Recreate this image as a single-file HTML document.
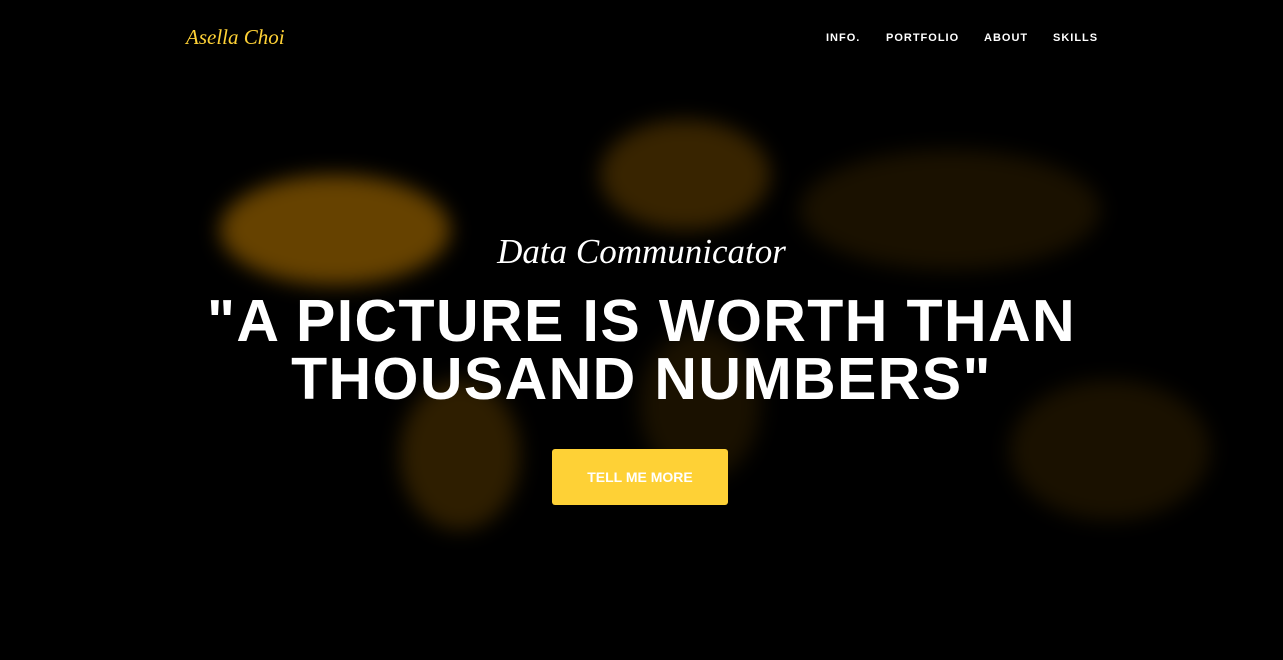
<!DOCTYPE html>
<html><head><meta charset="utf-8"><style>
html,body{margin:0;padding:0}
body{width:1283px;height:660px;background:#000;position:relative;overflow:hidden;font-family:"Liberation Sans",sans-serif}
.b{position:absolute;border-radius:50%;filter:blur(10px)}
.logo{position:absolute;left:186px;top:25px;color:#fed136;font-family:"Liberation Serif",serif;font-style:italic;font-size:21px}
.nav{position:absolute;top:32px;color:#fff;font-size:11px;font-weight:bold;letter-spacing:1px}
.sub{position:absolute;left:0;width:1283px;top:232px;text-align:center;color:#fff;font-family:"Liberation Serif",serif;font-style:italic;font-size:35px}
.h{position:absolute;left:0;width:1283px;top:292px;text-align:center;color:#fff;font-weight:bold;font-size:59px;line-height:58px;letter-spacing:1.4px}
.btn{position:absolute;left:552px;top:449px;width:176px;height:56px;background:#fed136;border-radius:3px;color:#fff;font-weight:bold;font-size:14px;text-align:center;line-height:56px}
</style></head><body>
<div class="b" style="left:220px;top:175px;width:230px;height:110px;background:rgba(255,165,0,.4)"></div>
<div class="b" style="left:600px;top:120px;width:170px;height:110px;background:rgba(255,165,0,.22)"></div>
<div class="b" style="left:800px;top:150px;width:300px;height:120px;background:rgba(255,165,0,.1)"></div>
<div class="b" style="left:400px;top:380px;width:120px;height:150px;background:rgba(255,165,0,.18)"></div>
<div class="b" style="left:1010px;top:380px;width:200px;height:140px;background:rgba(255,165,0,.1)"></div>
<div class="b" style="left:640px;top:330px;width:120px;height:150px;background:rgba(255,165,0,.1)"></div>
<div class="logo">Asella Choi</div>
<div class="nav" style="left:826px">INFO.</div>
<div class="nav" style="left:886px">PORTFOLIO</div>
<div class="nav" style="left:984px">ABOUT</div>
<div class="nav" style="left:1053px">SKILLS</div>
<div class="sub">Data Communicator</div>
<div class="h">"A PICTURE IS WORTH THAN<br>THOUSAND NUMBERS"</div>
<div class="btn">TELL ME MORE</div>
</body></html>
